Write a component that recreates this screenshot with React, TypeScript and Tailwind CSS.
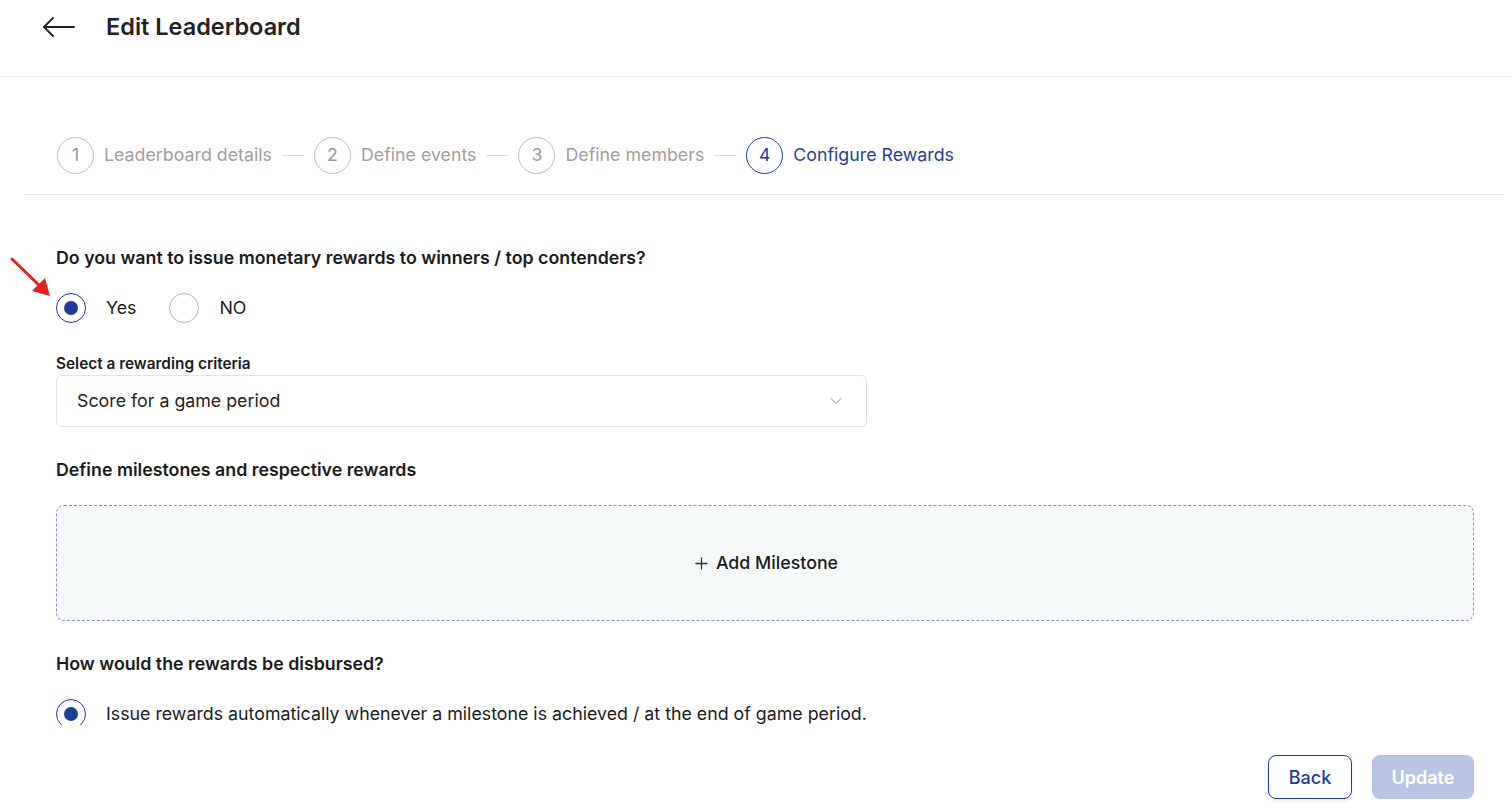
import React from "react";
import { ChevronDown, Plus } from "lucide-react";

const steps = [
  { n: 1, label: "Leaderboard details" },
  { n: 2, label: "Define events" },
  { n: 3, label: "Define members" },
  { n: 4, label: "Configure Rewards", active: true },
];

const Radio: React.FC<{ checked?: boolean }> = ({ checked }) => (
  <span
    className={`flex h-[30px] w-[30px] shrink-0 items-center justify-center rounded-full border ${
      checked ? "border-[#1d3c9b]" : "border-[#b5b5b5]"
    }`}
  >
    {checked && <span className="h-[14px] w-[14px] rounded-full bg-[#1d3c9b]" />}
  </span>
);

const App: React.FC = () => {
  return (
    <div className="relative flex h-[812px] flex-col overflow-hidden bg-white font-['Inter',sans-serif] text-[#1b1b1b]">
      {/* header */}
      <header className="flex h-[77px] shrink-0 items-center gap-[30px] border-b border-[#f0f0f0] pb-[22px] pl-[42px]">
        <svg width="34" height="20" viewBox="0 0 34 20" fill="none" stroke="#222" strokeWidth="1.8" strokeLinecap="round" strokeLinejoin="round">
          <path d="M2 10h30" />
          <path d="M11 1L2 10l9 9" />
        </svg>
        <h1 className="text-[23.5px] font-semibold text-[#222]">Edit Leaderboard</h1>
      </header>

      {/* stepper */}
      <div className="ml-[25px] mr-[9px] mt-[60px] flex h-[58px] shrink-0 items-start border-b border-[#e6e6e6] pl-[32px]">
        {steps.map((s, i) => (
          <div key={s.n} className="flex items-center">
            {i > 0 && <span className="mx-[10px] h-[1.5px] w-[22px] bg-[#dcdcdc]" />}
            <span
              className={`flex h-[37px] w-[37px] items-center justify-center rounded-full border text-[17.8px] ${
                s.active ? "border-[#1d3c9b] text-[#1d3c9b]" : "border-[#bdbdbd] text-[#9d9595]"
              }`}
            >
              {s.n}
            </span>
            <span
              className={`ml-[10px] text-[17.8px] ${s.active ? "text-[#2a3f8f]" : "text-[#a39c9c]"}`}
            >
              {s.label}
            </span>
          </div>
        ))}
      </div>

      {/* scroll content */}
      <main className="h-[530px] shrink-0 overflow-hidden pl-[56px] pr-[38px]">
        <p className="mt-[51px] text-[17.8px] font-semibold leading-[24px]">
          Do you want to issue monetary rewards to winners / top contenders?
        </p>
        <div className="mt-[23px] flex items-center">
          <Radio checked />
          <span className="ml-[20px] text-[17.8px]">Yes</span>
          <span className="ml-[33px]">
            <Radio />
          </span>
          <span className="ml-[20px] text-[17.8px]">NO</span>
        </div>

        <p className="mt-[31px] text-[15.4px] font-semibold leading-[20px]">Select a rewarding criteria</p>
        <div className="mt-[1px] flex h-[52px] w-[811px] items-center justify-between rounded-[6px] border border-[#e2e2e2] pl-[20px] pr-[20px]">
          <span className="text-[17.8px] text-[#222]">Score for a game period</span>
          <ChevronDown size={20} strokeWidth={1.2} color="#8a8a8a" />
        </div>

        <p className="mt-[31px] text-[17.8px] font-semibold leading-[24px]">Define milestones and respective rewards</p>
        <div className="mt-[23px] flex h-[116px] items-center justify-center rounded-[8px] border border-dashed border-[#8f8fbf] bg-[#f5f9fa]">
          <span className="flex items-center gap-[5px] text-[17.8px] font-medium text-[#1b1b1b]">
            <Plus size={19} strokeWidth={1.6} color="#333" />
            Add Milestone
          </span>
        </div>

        <p className="mt-[31px] text-[17.8px] font-semibold leading-[24px]">How would the rewards be disbursed?</p>
        <div className="mt-[23px] flex items-center">
          <Radio checked />
          <span className="ml-[20px] text-[17.8px]">
            Issue rewards automatically whenever a milestone is achieved / at the end of game period.
          </span>
        </div>
      </main>

      {/* footer */}
      <footer className="flex flex-1 items-start justify-end gap-[20px] pr-[38px] pt-[30px]">
        <button className="h-[44px] w-[84px] rounded-[8px] border border-[#1d3c9b] bg-white text-[18px] font-medium text-[#1d3c9b] shadow-[0_2px_4px_rgba(0,0,0,0.08)]">
          Back
        </button>
        <button className="h-[44px] w-[102px] rounded-[8px] bg-[#b8c4e6] text-[18px] font-semibold text-white">
          Update
        </button>
      </footer>

      {/* annotation arrow */}
      <svg className="absolute left-[8px] top-[255px]" width="48" height="46" viewBox="0 0 48 46">
        <path d="M4 4L34 33" stroke="#e3231e" strokeWidth="3" strokeLinecap="round" />
        <path d="M42 41L24 36L37 23Z" fill="#e3231e" />
      </svg>
    </div>
  );
};

export default App;
